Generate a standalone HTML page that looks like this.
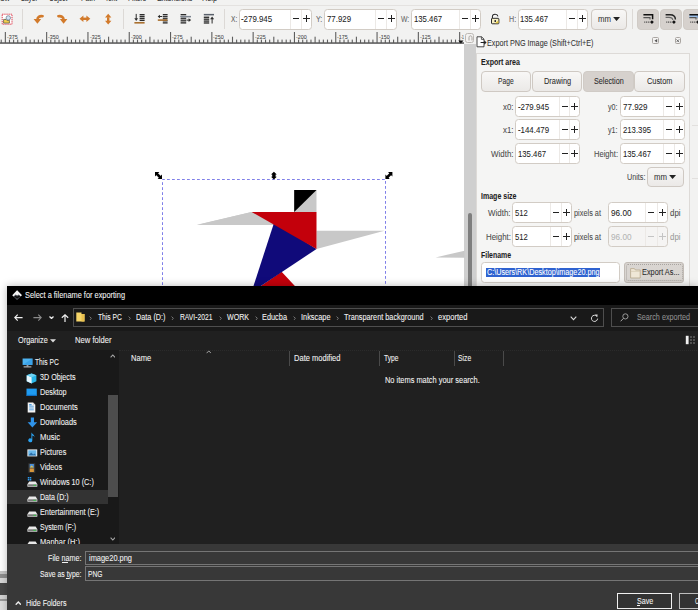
<!DOCTYPE html>
<html><head><meta charset="utf-8"><title>Export PNG Image</title>
<style>
html,body{margin:0;padding:0;}
body{width:698px;height:610px;overflow:hidden;background:#f2f2f1;font-family:"Liberation Sans",sans-serif;}
#root{position:relative;width:698px;height:610px;overflow:hidden;background:#f2f2f1;}
#root div,#root span.t,#root svg{position:absolute;box-sizing:border-box;}
span.t{white-space:pre;display:block;transform-origin:0 0;-webkit-text-stroke:0.06px currentColor;}
.inp{background:#fff;border:1px solid #d6d0ca;border-radius:3px;}
.btn{background:linear-gradient(#f8f7f6,#ebe9e7);border:1px solid #cfc9c3;border-radius:4px;}
.btnp{background:#d6d1cd;border:1px solid #d0cbc6;border-radius:4px;}

</style></head>
<body>
<div id="root">
<span class="t" style="left:-6.00px;top:-8px;font-size:8.5px;line-height:12px;transform:scaleX(0.8758);color:#333;">View</span>
<span class="t" style="left:21.30px;top:-8px;font-size:8.5px;line-height:12px;transform:scaleX(0.7854);color:#333;">Layer</span>
<span class="t" style="left:49.40px;top:-8px;font-size:8.5px;line-height:12px;transform:scaleX(0.7449);color:#333;">Object</span>
<span class="t" style="left:80.70px;top:-8px;font-size:8.5px;line-height:12px;transform:scaleX(0.8007);color:#333;">Path</span>
<span class="t" style="left:105.00px;top:-8px;font-size:8.5px;line-height:12px;transform:scaleX(0.7698);color:#333;">Text</span>
<span class="t" style="left:128.00px;top:-8px;font-size:8.5px;line-height:12px;transform:scaleX(0.7779);color:#333;">Filters</span>
<span class="t" style="left:156.60px;top:-8px;font-size:8.5px;line-height:12px;transform:scaleX(0.8514);color:#333;">Extensions</span>
<span class="t" style="left:202.00px;top:-8px;font-size:8.5px;line-height:12px;transform:scaleX(0.8581);color:#333;">Help</span>
<div style="left:0px;top:5px;width:698px;height:1px;background:#e4e2e0;"></div>
<div style="left:22px;top:8.5px;width:1px;height:20px;background:#dcd9d6;"></div>
<div style="left:123px;top:8.5px;width:1px;height:20px;background:#dcd9d6;"></div>
<div style="left:224px;top:8.5px;width:1px;height:20px;background:#dcd9d6;"></div>
<div style="left:632px;top:8.5px;width:1px;height:20px;background:#dcd9d6;"></div>
<span class="t" style="left:231.00px;top:13px;font-size:8.5px;line-height:12px;transform:scaleX(0.7720);color:#666;">X:</span>
<div style="left:239px;top:8.6px;width:72.5px;height:21px;background:#fff;border:1px solid #d2ccc5;border-radius:3.5px;"></div>
<div style="left:290px;top:9.6px;width:1px;height:19px;background:#ece9e6;"></div>
<div style="left:300.5px;top:9.6px;width:1px;height:19px;background:#ece9e6;"></div>
<span class="t" style="left:241.30px;top:13px;font-size:8.5px;line-height:12px;transform:scaleX(0.9268);color:#1c1c1c;">-279.945</span>
<div style="left:293px;top:18px;width:6px;height:1.3px;background:#222;"></div>
<div style="left:303.4px;top:18px;width:6.5px;height:1.3px;background:#222;"></div>
<div style="left:306px;top:15.4px;width:1.3px;height:6.5px;background:#222;"></div>
<span class="t" style="left:316.00px;top:13px;font-size:8.5px;line-height:12px;transform:scaleX(0.8331);color:#666;">Y:</span>
<div style="left:324px;top:8.6px;width:72.5px;height:21px;background:#fff;border:1px solid #d2ccc5;border-radius:3.5px;"></div>
<div style="left:375px;top:9.6px;width:1px;height:19px;background:#ece9e6;"></div>
<div style="left:385.5px;top:9.6px;width:1px;height:19px;background:#ece9e6;"></div>
<span class="t" style="left:326.50px;top:13px;font-size:8.5px;line-height:12px;transform:scaleX(0.9231);color:#1c1c1c;">77.929</span>
<div style="left:378px;top:18px;width:6px;height:1.3px;background:#222;"></div>
<div style="left:388.4px;top:18px;width:6.5px;height:1.3px;background:#222;"></div>
<div style="left:391px;top:15.4px;width:1.3px;height:6.5px;background:#222;"></div>
<span class="t" style="left:401.00px;top:13px;font-size:8.5px;line-height:12px;transform:scaleX(0.8015);color:#666;">W:</span>
<div style="left:411px;top:8.6px;width:70px;height:21px;background:#fff;border:1px solid #d2ccc5;border-radius:3.5px;"></div>
<div style="left:459px;top:9.6px;width:1px;height:19px;background:#ece9e6;"></div>
<div style="left:470px;top:9.6px;width:1px;height:19px;background:#ece9e6;"></div>
<span class="t" style="left:413.50px;top:13px;font-size:8.5px;line-height:12px;transform:scaleX(0.9113);color:#1c1c1c;">135.467</span>
<div style="left:462px;top:18px;width:6px;height:1.3px;background:#222;"></div>
<div style="left:472.4px;top:18px;width:6.5px;height:1.3px;background:#222;"></div>
<div style="left:475px;top:15.4px;width:1.3px;height:6.5px;background:#222;"></div>
<span class="t" style="left:508.70px;top:13px;font-size:8.5px;line-height:12px;transform:scaleX(0.8353);color:#666;">H:</span>
<div style="left:518px;top:8.6px;width:69.5px;height:21px;background:#fff;border:1px solid #d2ccc5;border-radius:3.5px;"></div>
<div style="left:566px;top:9.6px;width:1px;height:19px;background:#ece9e6;"></div>
<div style="left:576.5px;top:9.6px;width:1px;height:19px;background:#ece9e6;"></div>
<span class="t" style="left:520.00px;top:13px;font-size:8.5px;line-height:12px;transform:scaleX(0.9113);color:#1c1c1c;">135.467</span>
<div style="left:569px;top:18px;width:6px;height:1.3px;background:#222;"></div>
<div style="left:579.4px;top:18px;width:6.5px;height:1.3px;background:#222;"></div>
<div style="left:582px;top:15.4px;width:1.3px;height:6.5px;background:#222;"></div>
<div class="btn" style="left:590.6px;top:8.6px;width:36.8px;height:21px;background:;"></div>
<span class="t" style="left:597.80px;top:13px;font-size:8.5px;line-height:12px;transform:scaleX(0.9180);color:#333;">mm</span>
<svg style="left:612.8px;top:17.2px" width="7.2" height="4" viewBox="0 0 8 4.6"><path d="M0 0H8L4 4.6Z" fill="#222"/></svg>
<div class="btnp" style="left:637px;top:8.7px;width:22.2px;height:21px;background:;"></div>
<div class="btnp" style="left:660px;top:8.7px;width:22.3px;height:21px;background:;"></div>
<div class="btnp" style="left:683.2px;top:8.7px;width:22.4px;height:21px;background:;"></div>
<svg style="left:1px;top:13px" width="12" height="12" viewBox="0 0 12 12"><rect x="1.2" y="1.2" width="9.8" height="10" fill="#fff" stroke="#dc3a4c" stroke-width="1" stroke-dasharray="1.3 0.8"/><path d="M2.6 6.4H5L5.8 7.3H8.4V10.1H2.6Z" fill="#f2cf4d" stroke="#4a4a3a" stroke-width="0.7"/><circle cx="7.3" cy="4.9" r="2.2" fill="#cfe4f5" stroke="#6f7f8e" stroke-width="0.8"/></svg>
<svg style="left:33px;top:14px" width="11" height="11" viewBox="0 0 11 11"><path d="M9.6 2.2C6.4 1.8 4.4 3.2 4.4 6" fill="none" stroke="#d27a2b" stroke-width="2.6" stroke-linecap="round"/><path d="M0.6 5H8.2L4.4 9.8Z" fill="#d27a2b"/></svg>
<svg style="left:57px;top:14px" width="11" height="11" viewBox="0 0 11 11"><path d="M1.4 2.2C4.6 1.8 6.6 3.2 6.6 6" fill="none" stroke="#d27a2b" stroke-width="2.6" stroke-linecap="round"/><path d="M2.8 5H10.4L6.6 9.8Z" fill="#d27a2b"/></svg>
<svg style="left:79px;top:15px" width="12" height="8" viewBox="0 0 12 8"><path d="M0.5 3.8L4.4 0.5V7.1Z M11.3 3.8L7.4 0.5V7.1Z" fill="#d27a2b"/><rect x="4" y="2.6" width="4" height="2.4" fill="#d27a2b"/></svg>
<svg style="left:104px;top:13px" width="8" height="12" viewBox="0 0 8 12"><path d="M4.2 0.7L7.4 4.5H1Z M4.2 11.5L7.4 7.7H1Z" fill="#d27a2b"/><rect x="3" y="4.2" width="2.4" height="3.8" fill="#d27a2b"/></svg>
<svg style="left:134px;top:13px" width="12" height="12" viewBox="0 0 12 12"><rect x="5.6" y="1.00" width="5" height="1.35" fill="#2c2c2c"/><rect x="5.6" y="2.90" width="5" height="1.35" fill="#2c2c2c"/><rect x="5.6" y="4.80" width="5" height="1.35" fill="#2c2c2c"/><rect x="5.6" y="6.70" width="5" height="1.35" fill="#2c2c2c"/><rect x="1.7" y="0.9" width="1" height="5" fill="#2c2c2c"/><path d="M0.3 5.2H4.1L2.2 8Z" fill="#2c2c2c"/><rect x="0.4" y="9" width="10.2" height="1.6" fill="#a9702f"/></svg>
<svg style="left:157px;top:13px" width="12" height="12" viewBox="0 0 12 12"><rect x="5.8" y="1.00" width="4.8" height="1.35" fill="#2c2c2c"/><rect x="5.8" y="3.05" width="4.8" height="1.35" fill="#2c2c2c"/><rect x="5.8" y="5.10" width="4.8" height="1.35" fill="#2c2c2c"/><rect x="5.8" y="7.15" width="4.8" height="1.35" fill="#2c2c2c"/><rect x="5.8" y="9.20" width="4.8" height="1.35" fill="#2c2c2c"/><rect x="2" y="3" width="3.2" height="1" fill="#2c2c2c"/><path d="M0.6 3.5L3 1.7V5.3Z" fill="#2c2c2c"/><rect x="0.8" y="6.3" width="9.5" height="1.6" fill="#a9702f"/></svg>
<svg style="left:180px;top:13px" width="12" height="12" viewBox="0 0 12 12"><rect x="0.6" y="1.00" width="5.6" height="1.35" fill="#2c2c2c"/><rect x="0.6" y="3.05" width="5.6" height="1.35" fill="#2c2c2c"/><rect x="0.6" y="5.10" width="5.6" height="1.35" fill="#2c2c2c"/><rect x="0.6" y="7.15" width="5.6" height="1.35" fill="#2c2c2c"/><rect x="0.6" y="9.20" width="5.6" height="1.35" fill="#2c2c2c"/><rect x="0.8" y="2.9" width="10.2" height="1.5" fill="#7d8590"/><rect x="6.6" y="6.6" width="3" height="1" fill="#2c2c2c"/><path d="M11.2 7.1L8.6 5.2V9Z" fill="#2c2c2c"/></svg>
<svg style="left:203px;top:13px" width="12" height="12" viewBox="0 0 12 12"><rect x="0.8" y="0.9" width="10.2" height="1.5" fill="#59606b"/><rect x="0.8" y="3.60" width="5.4" height="1.35" fill="#2c2c2c"/><rect x="0.8" y="5.50" width="5.4" height="1.35" fill="#2c2c2c"/><rect x="0.8" y="7.40" width="5.4" height="1.35" fill="#2c2c2c"/><rect x="0.8" y="9.30" width="5.4" height="1.35" fill="#2c2c2c"/><rect x="8.6" y="5.5" width="1" height="5" fill="#2c2c2c"/><path d="M9.1 3.4L11.1 6.3H7.1Z" fill="#2c2c2c"/></svg>
<svg style="left:490px;top:13px" width="11" height="12" viewBox="0 0 11 12"><path d="M2.4 5.4V3.6C2.4 0.8 7.4 0.4 8 3.4" fill="none" stroke="#fff" stroke-width="2.4"/><rect x="0.6" y="4.6" width="9.2" height="7" rx="1" fill="#fff"/><path d="M2.4 5.4V3.6C2.4 0.8 7.4 0.4 8 3.4" fill="none" stroke="#2a2a2a" stroke-width="1.1"/><rect x="1.5" y="5.3" width="7.4" height="5.5" rx="0.7" fill="#f6efc4" stroke="#2a2a2a" stroke-width="1"/><path d="M5 10.3H8.4V7.4Z" fill="#e9c93c"/><rect x="4.5" y="7.1" width="1.5" height="1.9" fill="#2a2a2a"/></svg>
<svg style="left:642.6px;top:13px" width="12" height="12" viewBox="0 0 12 12"><path d="M0.4 1.8H9.6V6.2" fill="none" stroke="#111" stroke-width="1.5"/><path d="M0.4 4.6H7V6.4" fill="none" stroke="#555" stroke-width="1.1"/><path d="M1.2 9.1H7.4" fill="none" stroke="#333" stroke-width="1" stroke-dasharray="1.1 0.7"/><path d="M7.2 9.1L8.9 7.3L10.8 9.1L8.9 10.9Z" fill="#111"/></svg>
<svg style="left:688.7px;top:13px" width="12" height="12" viewBox="0 0 12 12"><rect x="0.4" y="1.6" width="10" height="3.4" fill="#9dc0ea"/><path d="M0.4 1.8H9.6V6.2" fill="none" stroke="#111" stroke-width="1.5"/><path d="M0.4 4.6H7V6.4" fill="none" stroke="#555" stroke-width="1.1"/><path d="M1.2 9.1H7.4" fill="none" stroke="#333" stroke-width="1" stroke-dasharray="1.1 0.7"/><path d="M7.2 9.1L8.9 7.3L10.8 9.1L8.9 10.9Z" fill="#111"/></svg>
<svg style="left:665.4px;top:13px" width="12" height="12" viewBox="0 0 12 12"><path d="M0.6 1.8H5C8.6 1.8 10.4 3.6 10.4 6.6" fill="none" stroke="#222" stroke-width="1.4"/><path d="M0.6 4.4H4C6.4 4.4 7.6 5.4 7.8 7" fill="none" stroke="#666" stroke-width="1.1"/><path d="M1.2 9.1H7.4" fill="none" stroke="#333" stroke-width="1" stroke-dasharray="1.1 0.7"/><path d="M7.2 9.1L8.9 7.3L10.8 9.1L8.9 10.9Z" fill="#111"/></svg>
<svg style="left:0;top:31px" width="464" height="13" viewBox="0 0 464 13"><rect x="0.67" y="8.600000000000001" width="1.1" height="3.4" fill="#5e5e5e"/><rect x="4.80" y="1" width="1.1" height="11.0" fill="#5e5e5e"/><rect x="8.93" y="8.600000000000001" width="1.1" height="3.4" fill="#5e5e5e"/><rect x="13.06" y="8.600000000000001" width="1.1" height="3.4" fill="#5e5e5e"/><rect x="17.19" y="8.600000000000001" width="1.1" height="3.4" fill="#5e5e5e"/><rect x="21.32" y="8.600000000000001" width="1.1" height="3.4" fill="#5e5e5e"/><rect x="25.45" y="5.700000000000003" width="1.1" height="6.3" fill="#5e5e5e"/><rect x="29.58" y="8.600000000000001" width="1.1" height="3.4" fill="#5e5e5e"/><rect x="33.71" y="8.600000000000001" width="1.1" height="3.4" fill="#5e5e5e"/><rect x="37.84" y="8.600000000000001" width="1.1" height="3.4" fill="#5e5e5e"/><rect x="41.97" y="8.600000000000001" width="1.1" height="3.4" fill="#5e5e5e"/><rect x="46.10" y="1" width="1.1" height="11.0" fill="#5e5e5e"/><rect x="50.23" y="8.600000000000001" width="1.1" height="3.4" fill="#5e5e5e"/><rect x="54.36" y="8.600000000000001" width="1.1" height="3.4" fill="#5e5e5e"/><rect x="58.49" y="8.600000000000001" width="1.1" height="3.4" fill="#5e5e5e"/><rect x="62.62" y="8.600000000000001" width="1.1" height="3.4" fill="#5e5e5e"/><rect x="66.75" y="5.700000000000003" width="1.1" height="6.3" fill="#5e5e5e"/><rect x="70.88" y="8.600000000000001" width="1.1" height="3.4" fill="#5e5e5e"/><rect x="75.01" y="8.600000000000001" width="1.1" height="3.4" fill="#5e5e5e"/><rect x="79.14" y="8.600000000000001" width="1.1" height="3.4" fill="#5e5e5e"/><rect x="83.27" y="8.600000000000001" width="1.1" height="3.4" fill="#5e5e5e"/><rect x="87.40" y="1" width="1.1" height="11.0" fill="#5e5e5e"/><rect x="91.53" y="8.600000000000001" width="1.1" height="3.4" fill="#5e5e5e"/><rect x="95.66" y="8.600000000000001" width="1.1" height="3.4" fill="#5e5e5e"/><rect x="99.79" y="8.600000000000001" width="1.1" height="3.4" fill="#5e5e5e"/><rect x="103.92" y="8.600000000000001" width="1.1" height="3.4" fill="#5e5e5e"/><rect x="108.05" y="5.700000000000003" width="1.1" height="6.3" fill="#5e5e5e"/><rect x="112.18" y="8.600000000000001" width="1.1" height="3.4" fill="#5e5e5e"/><rect x="116.31" y="8.600000000000001" width="1.1" height="3.4" fill="#5e5e5e"/><rect x="120.44" y="8.600000000000001" width="1.1" height="3.4" fill="#5e5e5e"/><rect x="124.57" y="8.600000000000001" width="1.1" height="3.4" fill="#5e5e5e"/><rect x="128.70" y="1" width="1.1" height="11.0" fill="#5e5e5e"/><rect x="132.83" y="8.600000000000001" width="1.1" height="3.4" fill="#5e5e5e"/><rect x="136.96" y="8.600000000000001" width="1.1" height="3.4" fill="#5e5e5e"/><rect x="141.09" y="8.600000000000001" width="1.1" height="3.4" fill="#5e5e5e"/><rect x="145.22" y="8.600000000000001" width="1.1" height="3.4" fill="#5e5e5e"/><rect x="149.35" y="5.700000000000003" width="1.1" height="6.3" fill="#5e5e5e"/><rect x="153.48" y="8.600000000000001" width="1.1" height="3.4" fill="#5e5e5e"/><rect x="157.61" y="8.600000000000001" width="1.1" height="3.4" fill="#5e5e5e"/><rect x="161.74" y="8.600000000000001" width="1.1" height="3.4" fill="#5e5e5e"/><rect x="165.87" y="8.600000000000001" width="1.1" height="3.4" fill="#5e5e5e"/><rect x="170.00" y="1" width="1.1" height="11.0" fill="#5e5e5e"/><rect x="174.13" y="8.600000000000001" width="1.1" height="3.4" fill="#5e5e5e"/><rect x="178.26" y="8.600000000000001" width="1.1" height="3.4" fill="#5e5e5e"/><rect x="182.39" y="8.600000000000001" width="1.1" height="3.4" fill="#5e5e5e"/><rect x="186.52" y="8.600000000000001" width="1.1" height="3.4" fill="#5e5e5e"/><rect x="190.65" y="5.700000000000003" width="1.1" height="6.3" fill="#5e5e5e"/><rect x="194.78" y="8.600000000000001" width="1.1" height="3.4" fill="#5e5e5e"/><rect x="198.91" y="8.600000000000001" width="1.1" height="3.4" fill="#5e5e5e"/><rect x="203.04" y="8.600000000000001" width="1.1" height="3.4" fill="#5e5e5e"/><rect x="207.17" y="8.600000000000001" width="1.1" height="3.4" fill="#5e5e5e"/><rect x="211.30" y="1" width="1.1" height="11.0" fill="#5e5e5e"/><rect x="215.43" y="8.600000000000001" width="1.1" height="3.4" fill="#5e5e5e"/><rect x="219.56" y="8.600000000000001" width="1.1" height="3.4" fill="#5e5e5e"/><rect x="223.69" y="8.600000000000001" width="1.1" height="3.4" fill="#5e5e5e"/><rect x="227.82" y="8.600000000000001" width="1.1" height="3.4" fill="#5e5e5e"/><rect x="231.95" y="5.700000000000003" width="1.1" height="6.3" fill="#5e5e5e"/><rect x="236.08" y="8.600000000000001" width="1.1" height="3.4" fill="#5e5e5e"/><rect x="240.21" y="8.600000000000001" width="1.1" height="3.4" fill="#5e5e5e"/><rect x="244.34" y="8.600000000000001" width="1.1" height="3.4" fill="#5e5e5e"/><rect x="248.47" y="8.600000000000001" width="1.1" height="3.4" fill="#5e5e5e"/><rect x="252.60" y="1" width="1.1" height="11.0" fill="#5e5e5e"/><rect x="256.73" y="8.600000000000001" width="1.1" height="3.4" fill="#5e5e5e"/><rect x="260.86" y="8.600000000000001" width="1.1" height="3.4" fill="#5e5e5e"/><rect x="264.99" y="8.600000000000001" width="1.1" height="3.4" fill="#5e5e5e"/><rect x="269.12" y="8.600000000000001" width="1.1" height="3.4" fill="#5e5e5e"/><rect x="273.25" y="5.700000000000003" width="1.1" height="6.3" fill="#5e5e5e"/><rect x="277.38" y="8.600000000000001" width="1.1" height="3.4" fill="#5e5e5e"/><rect x="281.51" y="8.600000000000001" width="1.1" height="3.4" fill="#5e5e5e"/><rect x="285.64" y="8.600000000000001" width="1.1" height="3.4" fill="#5e5e5e"/><rect x="289.77" y="8.600000000000001" width="1.1" height="3.4" fill="#5e5e5e"/><rect x="293.90" y="1" width="1.1" height="11.0" fill="#5e5e5e"/><rect x="298.03" y="8.600000000000001" width="1.1" height="3.4" fill="#5e5e5e"/><rect x="302.16" y="8.600000000000001" width="1.1" height="3.4" fill="#5e5e5e"/><rect x="306.29" y="8.600000000000001" width="1.1" height="3.4" fill="#5e5e5e"/><rect x="310.42" y="8.600000000000001" width="1.1" height="3.4" fill="#5e5e5e"/><rect x="314.55" y="5.700000000000003" width="1.1" height="6.3" fill="#5e5e5e"/><rect x="318.68" y="8.600000000000001" width="1.1" height="3.4" fill="#5e5e5e"/><rect x="322.81" y="8.600000000000001" width="1.1" height="3.4" fill="#5e5e5e"/><rect x="326.94" y="8.600000000000001" width="1.1" height="3.4" fill="#5e5e5e"/><rect x="331.07" y="8.600000000000001" width="1.1" height="3.4" fill="#5e5e5e"/><rect x="335.20" y="1" width="1.1" height="11.0" fill="#5e5e5e"/><rect x="339.33" y="8.600000000000001" width="1.1" height="3.4" fill="#5e5e5e"/><rect x="343.46" y="8.600000000000001" width="1.1" height="3.4" fill="#5e5e5e"/><rect x="347.59" y="8.600000000000001" width="1.1" height="3.4" fill="#5e5e5e"/><rect x="351.72" y="8.600000000000001" width="1.1" height="3.4" fill="#5e5e5e"/><rect x="355.85" y="5.700000000000003" width="1.1" height="6.3" fill="#5e5e5e"/><rect x="359.98" y="8.600000000000001" width="1.1" height="3.4" fill="#5e5e5e"/><rect x="364.11" y="8.600000000000001" width="1.1" height="3.4" fill="#5e5e5e"/><rect x="368.24" y="8.600000000000001" width="1.1" height="3.4" fill="#5e5e5e"/><rect x="372.37" y="8.600000000000001" width="1.1" height="3.4" fill="#5e5e5e"/><rect x="376.50" y="1" width="1.1" height="11.0" fill="#5e5e5e"/><rect x="380.63" y="8.600000000000001" width="1.1" height="3.4" fill="#5e5e5e"/><rect x="384.76" y="8.600000000000001" width="1.1" height="3.4" fill="#5e5e5e"/><rect x="388.89" y="8.600000000000001" width="1.1" height="3.4" fill="#5e5e5e"/><rect x="393.02" y="8.600000000000001" width="1.1" height="3.4" fill="#5e5e5e"/><rect x="397.15" y="5.700000000000003" width="1.1" height="6.3" fill="#5e5e5e"/><rect x="401.28" y="8.600000000000001" width="1.1" height="3.4" fill="#5e5e5e"/><rect x="405.41" y="8.600000000000001" width="1.1" height="3.4" fill="#5e5e5e"/><rect x="409.54" y="8.600000000000001" width="1.1" height="3.4" fill="#5e5e5e"/><rect x="413.67" y="8.600000000000001" width="1.1" height="3.4" fill="#5e5e5e"/><rect x="417.80" y="1" width="1.1" height="11.0" fill="#5e5e5e"/><rect x="421.93" y="8.600000000000001" width="1.1" height="3.4" fill="#5e5e5e"/><rect x="426.06" y="8.600000000000001" width="1.1" height="3.4" fill="#5e5e5e"/><rect x="430.19" y="8.600000000000001" width="1.1" height="3.4" fill="#5e5e5e"/><rect x="434.32" y="8.600000000000001" width="1.1" height="3.4" fill="#5e5e5e"/><rect x="438.45" y="5.700000000000003" width="1.1" height="6.3" fill="#5e5e5e"/><rect x="442.58" y="8.600000000000001" width="1.1" height="3.4" fill="#5e5e5e"/><rect x="446.71" y="8.600000000000001" width="1.1" height="3.4" fill="#5e5e5e"/><rect x="450.84" y="8.600000000000001" width="1.1" height="3.4" fill="#5e5e5e"/><rect x="454.97" y="8.600000000000001" width="1.1" height="3.4" fill="#5e5e5e"/><rect x="459.10" y="1" width="1.1" height="11.0" fill="#5e5e5e"/><rect x="0" y="11.3" width="464" height="1.5" fill="#585858"/></svg>
<span class="t" style="left:6.90px;top:32px;font-size:6px;line-height:10px;transform:scaleX(0.8910);color:#444;">-375</span>
<span class="t" style="left:48.20px;top:32px;font-size:6px;line-height:10px;transform:scaleX(0.8910);color:#444;">-350</span>
<span class="t" style="left:89.50px;top:32px;font-size:6px;line-height:10px;transform:scaleX(0.8910);color:#444;">-325</span>
<span class="t" style="left:130.80px;top:32px;font-size:6px;line-height:10px;transform:scaleX(0.8910);color:#444;">-300</span>
<span class="t" style="left:172.10px;top:32px;font-size:6px;line-height:10px;transform:scaleX(0.8910);color:#444;">-275</span>
<span class="t" style="left:213.40px;top:32px;font-size:6px;line-height:10px;transform:scaleX(0.8910);color:#444;">-250</span>
<span class="t" style="left:254.70px;top:32px;font-size:6px;line-height:10px;transform:scaleX(0.8910);color:#444;">-225</span>
<span class="t" style="left:296.00px;top:32px;font-size:6px;line-height:10px;transform:scaleX(0.8910);color:#444;">-200</span>
<span class="t" style="left:337.30px;top:32px;font-size:6px;line-height:10px;transform:scaleX(0.8910);color:#444;">-175</span>
<span class="t" style="left:378.60px;top:32px;font-size:6px;line-height:10px;transform:scaleX(0.8910);color:#444;">-150</span>
<span class="t" style="left:419.90px;top:32px;font-size:6px;line-height:10px;transform:scaleX(0.8910);color:#444;">-125</span>
<span class="t" style="left:461.20px;top:32px;font-size:6px;line-height:10px;transform:scaleX(0.5436);color:#444;">-1</span>
<div style="left:0px;top:44px;width:464px;height:527px;background:#fff;"></div>
<svg style="left:458px;top:40px" width="6" height="4" viewBox="0 0 6 4"><path d="M0.3 0.6H5.5L2.9 3.6Z" fill="#111"/></svg>
<div style="left:464.8px;top:32.5px;width:9.6px;height:10.5px;background:#f3f2f1;border:1px solid #bcb8b4;border-radius:2.5px;"></div>
<svg style="left:467.5px;top:34.5px" width="5" height="6" viewBox="0 0 5 6"><path d="M1 5.5V2.5C1 0.3 4 0.3 4 2.5V5.5" fill="none" stroke="#a6a39f" stroke-width="1"/></svg>
<div style="left:464px;top:44px;width:11.6px;height:245px;background:#cfcfcf;"></div>
<div style="left:467.9px;top:213px;width:3.8px;height:80px;background:#7e7e7e;border-radius:2px;"></div>
<svg style="left:150px;top:160px" width="320" height="130" viewBox="150 160 320 130"><path d="M197 224.7L251.5 212V224.7Z" fill="#c8c8c8"/><path d="M251.5 212L275 212L275 224.9L197 224.9Z" fill="#c8c8c8"/><path d="M294.2 190H316.5V212H294.2Z" fill="#c8c8c8"/><path d="M294.2 190H316.5L294.2 212Z" fill="#000"/><path d="M316.5 230.8H384.5L316.5 249Z" fill="#c8c8c8"/><path d="M281.6 271.7L255 290H298.6Z" fill="#c3000b"/><path d="M274.3 222L316.5 249L254.8 290H252.2Z" fill="#100a7a"/><path d="M251.6 212H316.5V249Z" fill="#c3000b"/><path d="M435.5 257.4L464.5 250.7V257.7Z" fill="#c8c8c8"/><path d="M162.5 290V179.5H385.5V290" fill="none" stroke="#7070e6" stroke-width="0.9" stroke-dasharray="2.8 2.2"/><g fill="#000"><path d="M155 172.1H159.4L155 176.5Z M162 179H157.6L162 174.6Z"/><path d="M156.6 173.7L160.4 177.5" stroke="#000" stroke-width="2.6"/><path d="M392.4 172.1H388L392.4 176.5Z M385.4 179H389.8L385.4 174.6Z"/><path d="M390.8 173.7L387 177.5" stroke="#000" stroke-width="2.6"/><path d="M273.9 171.8L276.8 174.6H275.6V176.8H276.8L273.9 179.6L271 176.8H272.2V174.6H271Z"/></g></svg>
<svg style="left:476px;top:36px" width="11" height="12" viewBox="0 0 11 12"><path d="M1 0.8H5.6L8 3.2V10.8H1Z" fill="#fff" stroke="#333" stroke-width="0.9"/><path d="M5.4 0.8V3.4H8" fill="none" stroke="#333" stroke-width="0.8"/><path d="M4.6 5.9H8.2V4.3L10.6 6.5L8.2 8.7V7.1H4.6Z" fill="#222"/></svg>
<span class="t" style="left:487.00px;top:37px;font-size:8.5px;line-height:12px;transform:scaleX(0.8508);color:#333;">Export PNG Image (Shift+Ctrl+E)</span>
<div style="left:652px;top:37px;width:6.5px;height:6.5px;background:#f4f3f2;border:1px solid #aaa6a2;border-radius:1.5px;"></div>
<div style="left:674.5px;top:37px;width:6.5px;height:6.5px;background:#f4f3f2;border:1px solid #aaa6a2;border-radius:1.5px;"></div>
<svg style="left:653.5px;top:38.7px" width="4" height="4" viewBox="0 0 4 4"><path d="M0.4 1.7L3.2 0V3.4Z" fill="#555"/></svg>
<svg style="left:676px;top:38.5px" width="4" height="4" viewBox="0 0 4 4"><path d="M0.4 0.4L3.2 3.2M3.2 0.4L0.4 3.2" stroke="#555" stroke-width="0.8"/></svg>
<div style="left:476px;top:52.6px;width:213.6px;height:236px;background:#f5f5f4;border:1px solid #dddad7;"></div>
<span class="t" style="left:480.90px;top:56px;font-size:8.5px;line-height:12px;transform:scaleX(0.8317);color:#1e1e1e;font-weight:bold;">Export area</span>
<div class="btn" style="left:480.7px;top:71px;width:50.5px;height:20.7px;background:;"></div>
<span class="t" style="left:498.00px;top:75px;font-size:8.5px;line-height:12px;transform:scaleX(0.7858);color:#2a2a2a;">Page</span>
<div class="btn" style="left:531.7px;top:71px;width:50.5px;height:20.7px;background:;"></div>
<span class="t" style="left:543.60px;top:75px;font-size:8.5px;line-height:12px;transform:scaleX(0.8724);color:#2a2a2a;">Drawing</span>
<div class="btnp" style="left:582.6px;top:71px;width:51px;height:20.7px;background:;"></div>
<span class="t" style="left:593.50px;top:75px;font-size:8.5px;line-height:12px;transform:scaleX(0.8494);color:#2a2a2a;">Selection</span>
<div class="btn" style="left:634.4px;top:71px;width:50.3px;height:20.7px;background:;"></div>
<span class="t" style="left:647.00px;top:75px;font-size:8.5px;line-height:12px;transform:scaleX(0.8673);color:#2a2a2a;">Custom</span>
<span class="t" style="left:503.00px;top:101px;font-size:8.5px;line-height:12px;transform:scaleX(0.9260);color:#4a4a4a;">x0:</span>
<div style="left:515px;top:96px;width:65px;height:21px;background:#fff;border:1px solid #d2ccc5;border-radius:3.5px;"></div>
<div style="left:558.9px;top:97px;width:1px;height:19px;background:#ece9e6;"></div>
<div style="left:569.4px;top:97px;width:1px;height:19px;background:#ece9e6;"></div>
<span class="t" style="left:517.50px;top:101px;font-size:8.5px;line-height:12px;transform:scaleX(0.9238);color:#1c1c1c;">-279.945</span>
<div style="left:562px;top:106px;width:6px;height:1.3px;background:#222;"></div>
<div style="left:571.4px;top:106px;width:6.5px;height:1.3px;background:#222;"></div>
<div style="left:574px;top:103.4px;width:1.3px;height:6.5px;background:#222;"></div>
<span class="t" style="left:608.00px;top:101px;font-size:8.5px;line-height:12px;transform:scaleX(0.8378);color:#4a4a4a;">y0:</span>
<div style="left:620px;top:96px;width:65px;height:21px;background:#fff;border:1px solid #d2ccc5;border-radius:3.5px;"></div>
<div style="left:663.4px;top:97px;width:1px;height:19px;background:#ece9e6;"></div>
<div style="left:674.3px;top:97px;width:1px;height:19px;background:#ece9e6;"></div>
<span class="t" style="left:622.50px;top:101px;font-size:8.5px;line-height:12px;transform:scaleX(0.9424);color:#1c1c1c;">77.929</span>
<div style="left:666px;top:106px;width:6px;height:1.3px;background:#222;"></div>
<div style="left:676.4px;top:106px;width:6.5px;height:1.3px;background:#222;"></div>
<div style="left:679px;top:103.4px;width:1.3px;height:6.5px;background:#222;"></div>
<span class="t" style="left:503.00px;top:124px;font-size:8.5px;line-height:12px;transform:scaleX(0.9260);color:#4a4a4a;">x1:</span>
<div style="left:515px;top:119px;width:65px;height:21px;background:#fff;border:1px solid #d2ccc5;border-radius:3.5px;"></div>
<div style="left:558.9px;top:120px;width:1px;height:19px;background:#ece9e6;"></div>
<div style="left:569.4px;top:120px;width:1px;height:19px;background:#ece9e6;"></div>
<span class="t" style="left:517.50px;top:124px;font-size:8.5px;line-height:12px;transform:scaleX(0.9238);color:#1c1c1c;">-144.479</span>
<div style="left:562px;top:129px;width:6px;height:1.3px;background:#222;"></div>
<div style="left:571.4px;top:129px;width:6.5px;height:1.3px;background:#222;"></div>
<div style="left:574px;top:126.4px;width:1.3px;height:6.5px;background:#222;"></div>
<span class="t" style="left:608.00px;top:124px;font-size:8.5px;line-height:12px;transform:scaleX(0.8378);color:#4a4a4a;">y1:</span>
<div style="left:620px;top:119px;width:65px;height:21px;background:#fff;border:1px solid #d2ccc5;border-radius:3.5px;"></div>
<div style="left:663.4px;top:120px;width:1px;height:19px;background:#ece9e6;"></div>
<div style="left:674.3px;top:120px;width:1px;height:19px;background:#ece9e6;"></div>
<span class="t" style="left:622.50px;top:124px;font-size:8.5px;line-height:12px;transform:scaleX(0.9113);color:#1c1c1c;">213.395</span>
<div style="left:666px;top:129px;width:6px;height:1.3px;background:#222;"></div>
<div style="left:676.4px;top:129px;width:6.5px;height:1.3px;background:#222;"></div>
<div style="left:679px;top:126.4px;width:1.3px;height:6.5px;background:#222;"></div>
<span class="t" style="left:491.00px;top:148px;font-size:8.5px;line-height:12px;transform:scaleX(0.9340);color:#4a4a4a;">Width:</span>
<div style="left:515px;top:143px;width:65px;height:21px;background:#fff;border:1px solid #d2ccc5;border-radius:3.5px;"></div>
<div style="left:558.9px;top:144px;width:1px;height:19px;background:#ece9e6;"></div>
<div style="left:569.4px;top:144px;width:1px;height:19px;background:#ece9e6;"></div>
<span class="t" style="left:517.50px;top:148px;font-size:8.5px;line-height:12px;transform:scaleX(0.9113);color:#1c1c1c;">135.467</span>
<div style="left:562px;top:153px;width:6px;height:1.3px;background:#222;"></div>
<div style="left:571.4px;top:153px;width:6.5px;height:1.3px;background:#222;"></div>
<div style="left:574px;top:150.4px;width:1.3px;height:6.5px;background:#222;"></div>
<span class="t" style="left:593.50px;top:148px;font-size:8.5px;line-height:12px;transform:scaleX(0.8911);color:#4a4a4a;">Height:</span>
<div style="left:620px;top:143px;width:65px;height:21px;background:#fff;border:1px solid #d2ccc5;border-radius:3.5px;"></div>
<div style="left:663.4px;top:144px;width:1px;height:19px;background:#ece9e6;"></div>
<div style="left:674.3px;top:144px;width:1px;height:19px;background:#ece9e6;"></div>
<span class="t" style="left:622.50px;top:148px;font-size:8.5px;line-height:12px;transform:scaleX(0.9113);color:#1c1c1c;">135.467</span>
<div style="left:666px;top:153px;width:6px;height:1.3px;background:#222;"></div>
<div style="left:676.4px;top:153px;width:6.5px;height:1.3px;background:#222;"></div>
<div style="left:679px;top:150.4px;width:1.3px;height:6.5px;background:#222;"></div>
<span class="t" style="left:627.00px;top:171px;font-size:8.5px;line-height:12px;transform:scaleX(0.8515);color:#4a4a4a;">Units:</span>
<div class="btn" style="left:647.3px;top:166.6px;width:37px;height:20.7px;background:;"></div>
<span class="t" style="left:654.30px;top:171px;font-size:8.5px;line-height:12px;transform:scaleX(0.9180);color:#333;">mm</span>
<svg style="left:669.4px;top:175.2px" width="7.2" height="4" viewBox="0 0 8 4.6"><path d="M0 0H8L4 4.6Z" fill="#222"/></svg>
<span class="t" style="left:481.00px;top:190px;font-size:8.5px;line-height:12px;transform:scaleX(0.8257);color:#1e1e1e;font-weight:bold;">Image size</span>
<span class="t" style="left:488.00px;top:207px;font-size:8.5px;line-height:12px;transform:scaleX(0.9340);color:#4a4a4a;">Width:</span>
<div style="left:512px;top:202px;width:60px;height:21px;background:#fff;border:1px solid #d2ccc5;border-radius:3.5px;"></div>
<div style="left:549.6px;top:203px;width:1px;height:19px;background:#ece9e6;"></div>
<div style="left:560.6px;top:203px;width:1px;height:19px;background:#ece9e6;"></div>
<span class="t" style="left:514.50px;top:207px;font-size:8.5px;line-height:12px;transform:scaleX(0.9026);color:#1c1c1c;">512</span>
<div style="left:553px;top:212px;width:6px;height:1.3px;background:#222;"></div>
<div style="left:563.4px;top:212px;width:6.5px;height:1.3px;background:#222;"></div>
<div style="left:566px;top:209.4px;width:1.3px;height:6.5px;background:#222;"></div>
<span class="t" style="left:574.00px;top:207px;font-size:8.5px;line-height:12px;transform:scaleX(0.8659);color:#4a4a4a;">pixels at</span>
<div style="left:608px;top:202px;width:60px;height:21px;background:#fff;border:1px solid #d2ccc5;border-radius:3.5px;"></div>
<div style="left:645.4px;top:203px;width:1px;height:19px;background:#ece9e6;"></div>
<div style="left:656.6px;top:203px;width:1px;height:19px;background:#ece9e6;"></div>
<span class="t" style="left:610.50px;top:207px;font-size:8.5px;line-height:12px;transform:scaleX(0.9638);color:#1c1c1c;">96.00</span>
<div style="left:648px;top:212px;width:6px;height:1.3px;background:#222;"></div>
<div style="left:659.4px;top:212px;width:6.5px;height:1.3px;background:#222;"></div>
<div style="left:662px;top:209.4px;width:1.3px;height:6.5px;background:#222;"></div>
<span class="t" style="left:670.00px;top:207px;font-size:8.5px;line-height:12px;transform:scaleX(0.9257);color:#4a4a4a;">dpi</span>
<span class="t" style="left:485.50px;top:231px;font-size:8.5px;line-height:12px;transform:scaleX(0.9283);color:#4a4a4a;">Height:</span>
<div style="left:512px;top:226px;width:60px;height:21px;background:#fff;border:1px solid #d2ccc5;border-radius:3.5px;"></div>
<div style="left:549.6px;top:227px;width:1px;height:19px;background:#ece9e6;"></div>
<div style="left:560.6px;top:227px;width:1px;height:19px;background:#ece9e6;"></div>
<span class="t" style="left:514.50px;top:231px;font-size:8.5px;line-height:12px;transform:scaleX(0.9026);color:#1c1c1c;">512</span>
<div style="left:553px;top:236px;width:6px;height:1.3px;background:#222;"></div>
<div style="left:563.4px;top:236px;width:6.5px;height:1.3px;background:#222;"></div>
<div style="left:566px;top:233.4px;width:1.3px;height:6.5px;background:#222;"></div>
<span class="t" style="left:574.00px;top:231px;font-size:8.5px;line-height:12px;transform:scaleX(0.8659);color:#4a4a4a;">pixels at</span>
<div style="left:608px;top:226px;width:60px;height:21px;background:#f5f4f3;border:1px solid #d2ccc5;border-radius:3.5px;"></div>
<div style="left:645.4px;top:227px;width:1px;height:19px;background:#ece9e6;"></div>
<div style="left:656.6px;top:227px;width:1px;height:19px;background:#ece9e6;"></div>
<span class="t" style="left:610.50px;top:231px;font-size:8.5px;line-height:12px;transform:scaleX(0.9638);color:#b4b4b4;">96.00</span>
<div style="left:648px;top:236px;width:6px;height:1.3px;background:#c4c4c4;"></div>
<div style="left:659.4px;top:236px;width:6.5px;height:1.3px;background:#c4c4c4;"></div>
<div style="left:662px;top:233.4px;width:1.3px;height:6.5px;background:#c4c4c4;"></div>
<span class="t" style="left:670.00px;top:231px;font-size:8.5px;line-height:12px;transform:scaleX(0.9257);color:#9a9a9a;">dpi</span>
<span class="t" style="left:481.00px;top:249px;font-size:8.5px;line-height:12px;transform:scaleX(0.8142);color:#1e1e1e;font-weight:bold;">Filename</span>
<div style="left:480.5px;top:262.3px;width:139.8px;height:20.7px;background:#fff;border:1px solid #d2ccc5;border-radius:3.5px;"></div>
<div style="left:486.2px;top:267.6px;width:113.8px;height:9.4px;background:#2f62d0;"></div>
<span class="t" style="left:487.00px;top:266px;font-size:8.5px;line-height:12px;transform:scaleX(0.8505);color:#fff;-webkit-text-stroke:0.08px currentColor;">C:\Users\RK\Desktop\image20.png</span>
<div style="left:624.4px;top:262.3px;width:59.8px;height:20.3px;background:#d9d5d1;border:1px solid #c2bcb6;border-radius:3px;"></div>
<div style="left:626px;top:264px;width:56.6px;height:17px;background:transparent;border:1px dotted #a8a4a0;border-radius:2px;"></div>
<svg style="left:629.5px;top:266.5px" width="11" height="12" viewBox="0 0 11 12"><path d="M0.6 1.6H4.4L5.4 3H10.2V11H0.6Z" fill="#efe7d6" stroke="#b5a78c" stroke-width="0.8"/><path d="M0.6 4.4H10.2" stroke="#cfc3a8" stroke-width="0.6"/></svg>
<span class="t" style="left:642.00px;top:266px;font-size:8.5px;line-height:12px;transform:scaleX(0.8628);color:#2a2a2a;">Export As...</span>
<div style="left:692px;top:125px;width:6px;height:1px;background:#e2e0de;"></div>
<div style="left:692px;top:178px;width:6px;height:1px;background:#e2e0de;"></div>
<div style="left:0px;top:571px;width:7px;height:3px;background:#c6c6c6;"></div>
<div style="left:0px;top:574px;width:7px;height:3.5px;background:#8e8e8e;"></div>
<div style="left:0px;top:577.5px;width:7px;height:5px;background:#d8d8d8;"></div>
<div style="left:0px;top:582.5px;width:7px;height:12px;background:#474747;"></div>
<div style="left:0px;top:594.5px;width:7px;height:4px;background:#d4d4d4;"></div>
<div style="left:0px;top:598.5px;width:7px;height:2.5px;background:#9a9a9a;"></div>
<div style="left:0px;top:601px;width:7px;height:9px;background:#dedede;"></div>
<div style="left:7px;top:286px;width:691px;height:330px;background:#202020;box-shadow:0 0 8px 0 rgba(0,0,0,0.28);"></div>
<div style="left:7px;top:286px;width:691px;height:19px;background:#000;"></div>
<div style="left:7px;top:305px;width:691px;height:26px;background:#191919;"></div>
<div style="left:7px;top:331px;width:691px;height:19px;background:#202020;"></div>
<div style="left:7px;top:350px;width:111.5px;height:194px;background:#191919;"></div>
<div style="left:118.5px;top:350px;width:580px;height:194px;background:#202020;"></div>
<div style="left:7px;top:544px;width:691px;height:70px;background:#383838;"></div>
<svg style="left:12px;top:289.5px" width="10.4" height="10.6" viewBox="0 0 10.4 10.6"><path d="M5.1 0.3L10 5.2L5.1 10.2L0.3 5.2Z" fill="#4a4d55"/><path d="M5.1 0.3L10 5.2L8.4 6.2L6.6 4.6L5.2 5.6L3.6 4.4L1.6 6.4L0.3 5.2Z" fill="#f4f4f4"/><path d="M3 5.8L5.2 6.4L7.4 5.6L8.2 6.6L5.2 8.6L2.4 6.8Z" fill="#0c0c0c"/></svg>
<span class="t" style="left:25.20px;top:289px;font-size:8.5px;line-height:12px;transform:scaleX(0.8710);color:#f2f2f2;-webkit-text-stroke:0.08px currentColor;">Select a filename for exporting</span>
<svg style="left:14.3px;top:314.2px" width="9" height="7.2" viewBox="0 0 9 7.2"><path d="M3.7 0.6L0.8 3.6L3.7 6.6M0.8 3.6H8.6" fill="none" stroke="#f0f0f0" stroke-width="1.2"/></svg>
<svg style="left:32.5px;top:314.2px" width="9" height="7.2" viewBox="0 0 9 7.2"><path d="M5.3 0.6L8.2 3.6L5.3 6.6M8.2 3.6H0.4" fill="none" stroke="#8a8a8a" stroke-width="1.1"/></svg>
<svg style="left:49.3px;top:315.8px" width="5" height="3.4" viewBox="0 0 6 4"><path d="M0.6 0.6L3 3L5.4 0.6" fill="none" stroke="#f0f0f0" stroke-width="1.5"/></svg>
<svg style="left:60.6px;top:313.8px" width="8" height="8.4" viewBox="0 0 8 8.4"><path d="M0.8 3.8L4 0.8L7.2 3.8M4 1V8.2" fill="none" stroke="#f0f0f0" stroke-width="1.2"/></svg>
<div style="left:73px;top:307.7px;width:531px;height:19.3px;background:#191919;border:1px solid #4e4e4e;"></div>
<svg style="left:76px;top:311.5px" width="9" height="10" viewBox="0 0 9 10"><path d="M0.3 0.5H5.5V2H8.5V9.5H0.3Z" fill="#f6d569"/><path d="M5.5 2H8.5V9.5H5.5Z" fill="#e9c04f"/></svg>
<span class="t" style="left:98.10px;top:311px;font-size:8.5px;line-height:12px;transform:scaleX(0.7907);color:#f2f2f2;-webkit-text-stroke:0.08px currentColor;">This PC</span>
<span class="t" style="left:136.00px;top:311px;font-size:8.5px;line-height:12px;transform:scaleX(0.8556);color:#f2f2f2;-webkit-text-stroke:0.08px currentColor;">Data (D:)</span>
<span class="t" style="left:179.50px;top:311px;font-size:8.5px;line-height:12px;transform:scaleX(0.7937);color:#f2f2f2;-webkit-text-stroke:0.08px currentColor;">RAVI-2021</span>
<span class="t" style="left:226.50px;top:311px;font-size:8.5px;line-height:12px;transform:scaleX(0.8320);color:#f2f2f2;-webkit-text-stroke:0.08px currentColor;">WORK</span>
<span class="t" style="left:262.00px;top:311px;font-size:8.5px;line-height:12px;transform:scaleX(0.8672);color:#f2f2f2;-webkit-text-stroke:0.08px currentColor;">Educba</span>
<span class="t" style="left:300.50px;top:311px;font-size:8.5px;line-height:12px;transform:scaleX(0.8671);color:#f2f2f2;-webkit-text-stroke:0.08px currentColor;">Inkscape</span>
<span class="t" style="left:344.20px;top:311px;font-size:8.5px;line-height:12px;transform:scaleX(0.8624);color:#f2f2f2;-webkit-text-stroke:0.08px currentColor;">Transparent background</span>
<span class="t" style="left:437.80px;top:311px;font-size:8.5px;line-height:12px;transform:scaleX(0.8918);color:#f2f2f2;-webkit-text-stroke:0.08px currentColor;">exported</span>
<svg style="left:89px;top:315.6px" width="3.2" height="4.8" viewBox="0 0 4 6"><path d="M0.7 0.7L3 3L0.7 5.3" fill="none" stroke="#9c9c9c" stroke-width="0.9"/></svg>
<svg style="left:128px;top:315.6px" width="3.2" height="4.8" viewBox="0 0 4 6"><path d="M0.7 0.7L3 3L0.7 5.3" fill="none" stroke="#9c9c9c" stroke-width="0.9"/></svg>
<svg style="left:171px;top:315.6px" width="3.2" height="4.8" viewBox="0 0 4 6"><path d="M0.7 0.7L3 3L0.7 5.3" fill="none" stroke="#9c9c9c" stroke-width="0.9"/></svg>
<svg style="left:218.5px;top:315.6px" width="3.2" height="4.8" viewBox="0 0 4 6"><path d="M0.7 0.7L3 3L0.7 5.3" fill="none" stroke="#9c9c9c" stroke-width="0.9"/></svg>
<svg style="left:254.5px;top:315.6px" width="3.2" height="4.8" viewBox="0 0 4 6"><path d="M0.7 0.7L3 3L0.7 5.3" fill="none" stroke="#9c9c9c" stroke-width="0.9"/></svg>
<svg style="left:292.5px;top:315.6px" width="3.2" height="4.8" viewBox="0 0 4 6"><path d="M0.7 0.7L3 3L0.7 5.3" fill="none" stroke="#9c9c9c" stroke-width="0.9"/></svg>
<svg style="left:336px;top:315.6px" width="3.2" height="4.8" viewBox="0 0 4 6"><path d="M0.7 0.7L3 3L0.7 5.3" fill="none" stroke="#9c9c9c" stroke-width="0.9"/></svg>
<svg style="left:430px;top:315.6px" width="3.2" height="4.8" viewBox="0 0 4 6"><path d="M0.7 0.7L3 3L0.7 5.3" fill="none" stroke="#9c9c9c" stroke-width="0.9"/></svg>
<svg style="left:570px;top:316px" width="7" height="5" viewBox="0 0 7 5"><path d="M0.7 0.7L3.5 3.6L6.3 0.7" fill="none" stroke="#d8d8d8" stroke-width="1.1"/></svg>
<svg style="left:589.5px;top:313.5px" width="9" height="9" viewBox="0 0 9 9"><path d="M6.9 2.4A3.1 3.1 0 1 0 7.6 4.6" fill="none" stroke="#d8d8d8" stroke-width="1"/><path d="M4.9 0.4L7.6 0.6L7.3 3.2Z" fill="#d8d8d8"/></svg>
<div style="left:610.8px;top:307.7px;width:95px;height:19.3px;background:#191919;border:1px solid #4e4e4e;"></div>
<svg style="left:620px;top:312.5px" width="9" height="9" viewBox="0 0 9 9"><circle cx="5.4" cy="3.4" r="2.6" fill="none" stroke="#a8a8a8" stroke-width="0.9"/><path d="M3.5 5.3L0.6 8.3" stroke="#a8a8a8" stroke-width="1"/></svg>
<span class="t" style="left:637.00px;top:311px;font-size:8.5px;line-height:12px;transform:scaleX(0.8497);color:#8f8f8f;-webkit-text-stroke:0.08px currentColor;">Search exported</span>
<span class="t" style="left:17.90px;top:334px;font-size:8.5px;line-height:12px;transform:scaleX(0.8611);color:#f2f2f2;-webkit-text-stroke:0.08px currentColor;">Organize</span>
<svg style="left:50px;top:339px" width="6" height="4" viewBox="0 0 6 4"><path d="M0 0.3H6L3 3.6Z" fill="#dcdcdc"/></svg>
<span class="t" style="left:75.00px;top:334px;font-size:8.5px;line-height:12px;transform:scaleX(0.8984);color:#f2f2f2;-webkit-text-stroke:0.08px currentColor;">New folder</span>
<svg style="left:685px;top:335px" width="12" height="10" viewBox="0 0 12 10"><rect x="0.8" y="0.8" width="2.8" height="8.4" fill="#f0f0f0"/><path d="M5 2H7M8 2H10M5 5H7M8 5H10M5 8H7M8 8H10" stroke="#8c8c8c" stroke-width="0.9"/></svg>
<div style="left:118.5px;top:349.5px;width:580px;height:1px;background:transparent;border-top:1px dotted #2b2b2b;"></div>
<div style="left:108px;top:350px;width:9.5px;height:194px;background:#191919;"></div>
<div style="left:108px;top:394.7px;width:9.5px;height:102.3px;background:#4d4d4d;"></div>
<svg style="left:109.8px;top:354.2px" width="5.6" height="4" viewBox="0 0 5.6 4"><path d="M0.6 3.4L2.8 1L5 3.4" fill="none" stroke="#a4a4a4" stroke-width="1.1"/></svg>
<svg style="left:109.8px;top:537.2px" width="5.6" height="4" viewBox="0 0 5.6 4"><path d="M0.6 0.6L2.8 3L5 0.6" fill="none" stroke="#a4a4a4" stroke-width="1.1"/></svg>
<div style="left:7px;top:490.3px;width:101px;height:14px;background:#333333;"></div>
<span class="t" style="left:131.10px;top:352px;font-size:8.5px;line-height:12px;transform:scaleX(0.8865);color:#f2f2f2;-webkit-text-stroke:0.08px currentColor;">Name</span>
<span class="t" style="left:293.50px;top:352px;font-size:8.5px;line-height:12px;transform:scaleX(0.8867);color:#f2f2f2;-webkit-text-stroke:0.08px currentColor;">Date modified</span>
<span class="t" style="left:384.00px;top:352px;font-size:8.5px;line-height:12px;transform:scaleX(0.7869);color:#f2f2f2;-webkit-text-stroke:0.08px currentColor;">Type</span>
<span class="t" style="left:458.00px;top:352px;font-size:8.5px;line-height:12px;transform:scaleX(0.7983);color:#f2f2f2;-webkit-text-stroke:0.08px currentColor;">Size</span>
<div style="left:289px;top:350.5px;width:1px;height:15.5px;background:#4a4a4a;"></div>
<div style="left:379px;top:350.5px;width:1px;height:15.5px;background:#4a4a4a;"></div>
<div style="left:454px;top:350.5px;width:1px;height:15.5px;background:#4a4a4a;"></div>
<div style="left:503px;top:350.5px;width:1px;height:15.5px;background:#4a4a4a;"></div>
<svg style="left:205.6px;top:350.2px" width="5.6" height="3.6" viewBox="0 0 5.6 3.6"><path d="M0.6 3.2L2.8 0.9L5 3.2" fill="none" stroke="#a4a4a4" stroke-width="1"/></svg>
<span class="t" style="left:385.30px;top:374px;font-size:8.5px;line-height:12px;transform:scaleX(0.8754);color:#f2f2f2;-webkit-text-stroke:0.08px currentColor;">No items match your search.</span>
<svg style="left:21.5px;top:358.09999999999997px" width="11" height="10" viewBox="0 0 11 10"><rect x="0.6" y="0.5" width="9.8" height="6.4" fill="#4db3f2"/><path d="M0.6 6.9L10.4 0.5V6.9Z" fill="#3aa2e8"/><rect x="4.6" y="6.9" width="1.8" height="1.6" fill="#9aa0a6"/><rect x="1.6" y="8.4" width="7.8" height="1" fill="#c9cdd1"/></svg>
<svg style="left:26px;top:372.5px" width="11" height="11" viewBox="0 0 11 11"><path d="M5.6 0.4L10.4 2.2V8.2L5.6 10.4L0.7 8.2V2.2Z" fill="#29b6e8"/><path d="M0.7 2.2L5.6 4.2V10.4L0.7 8.2Z" fill="#e9f6fc"/><path d="M5.6 0.4L10.4 2.2L5.6 4.2L0.7 2.2Z" fill="#6fd3f3"/></svg>
<svg style="left:26px;top:387.9px" width="11" height="9" viewBox="0 0 11 9"><rect x="0.5" y="0.6" width="10.3" height="7.2" fill="#1f9bf1"/><rect x="0.5" y="6.8" width="10.3" height="1.2" fill="#0f6fc4"/></svg>
<svg style="left:27px;top:402.09999999999997px" width="9" height="11" viewBox="0 0 9 11"><path d="M0.7 0.4H6L8.3 2.7V10.6H0.7Z" fill="#f3f3f3"/><path d="M6 0.4V2.7H8.3Z" fill="#c8c8c8"/><path d="M2.2 4.2H6.8M2.2 6H6.8M2.2 7.8H6.8" stroke="#4a9be0" stroke-width="0.9"/><rect x="2.2" y="2" width="2.4" height="1.4" fill="#4a9be0"/></svg>
<svg style="left:26.5px;top:417.09999999999997px" width="11" height="11" viewBox="0 0 11 11"><path d="M3.8 0.4H7V5.2H10.2L5.4 10.4L0.6 5.2H3.8Z" fill="#2f93ea"/></svg>
<svg style="left:27.5px;top:432.09999999999997px" width="8" height="11" viewBox="0 0 8 11"><path d="M3.4 0.3C4.2 2.4 6.8 2.8 6.6 5.6C6.2 3.9 5 3.8 4.3 3.6V8.4A2 1.9 0 1 1 3.4 6.7Z" fill="#2aa3f2"/></svg>
<svg style="left:26.5px;top:448.7px" width="11" height="8" viewBox="0 0 11 8"><rect x="0.4" y="0.4" width="9.8" height="7" fill="#f2f2f2"/><rect x="1.3" y="1.3" width="8" height="5.2" fill="#69b7ea"/><path d="M1.3 6.5L4.2 3.6L6.2 5.4L7.4 4.4L9.3 6.5Z" fill="#2d6fa8"/></svg>
<svg style="left:28px;top:462.7px" width="8" height="10" viewBox="0 0 8 10"><rect x="0.4" y="0.3" width="6.8" height="9.4" fill="#3a3a3a"/><rect x="1.7" y="1" width="4.2" height="3.6" fill="#4b8fd8"/><rect x="1.7" y="5.4" width="4.2" height="3.6" fill="#d8963a"/><path d="M1.7 4.6L3.6 2.6L5.9 4.6Z" fill="#e8c24a"/></svg>
<svg style="left:26.5px;top:475.5px" width="11" height="12" viewBox="0 0 11 12"><path d="M2.2 5.4H8.6L10.2 8V10.6H0.6V8Z" fill="#e9e9e9"/><path d="M0.6 8H10.2V10.8H0.6Z" fill="#bdbdbd"/><rect x="1.2" y="8.5" width="8.4" height="1.7" fill="#7a7a7a"/><rect x="6.4" y="8.8" width="2.6" height="1.1" fill="#3fbf4f"/><path d="M0.8 1H2.3V2.5H0.8ZM2.8 1H4.3V2.5H2.8ZM0.8 3H2.3V4.5H0.8ZM2.8 3H4.3V4.5H2.8Z" fill="#2f9bf0"/></svg>
<svg style="left:26.5px;top:490.5px" width="11" height="12" viewBox="0 0 11 12"><path d="M2.2 5.4H8.6L10.2 8V10.6H0.6V8Z" fill="#e9e9e9"/><path d="M0.6 8H10.2V10.8H0.6Z" fill="#bdbdbd"/><rect x="1.2" y="8.5" width="8.4" height="1.7" fill="#7a7a7a"/><rect x="6.4" y="8.8" width="2.6" height="1.1" fill="#3fbf4f"/></svg>
<svg style="left:26.5px;top:505.5px" width="11" height="12" viewBox="0 0 11 12"><path d="M2.2 5.4H8.6L10.2 8V10.6H0.6V8Z" fill="#e9e9e9"/><path d="M0.6 8H10.2V10.8H0.6Z" fill="#bdbdbd"/><rect x="1.2" y="8.5" width="8.4" height="1.7" fill="#7a7a7a"/><rect x="6.4" y="8.8" width="2.6" height="1.1" fill="#3fbf4f"/></svg>
<svg style="left:26.5px;top:520.5px" width="11" height="12" viewBox="0 0 11 12"><path d="M2.2 5.4H8.6L10.2 8V10.6H0.6V8Z" fill="#e9e9e9"/><path d="M0.6 8H10.2V10.8H0.6Z" fill="#bdbdbd"/><rect x="1.2" y="8.5" width="8.4" height="1.7" fill="#7a7a7a"/><rect x="6.4" y="8.8" width="2.6" height="1.1" fill="#3fbf4f"/></svg>
<svg style="left:26.5px;top:535.5px" width="11" height="12" viewBox="0 0 11 12"><path d="M2.2 5.4H8.6L10.2 8V10.6H0.6V8Z" fill="#e9e9e9"/><path d="M0.6 8H10.2V10.8H0.6Z" fill="#bdbdbd"/><rect x="1.2" y="8.5" width="8.4" height="1.7" fill="#7a7a7a"/><rect x="6.4" y="8.8" width="2.6" height="1.1" fill="#3fbf4f"/></svg>
<span class="t" style="left:35.30px;top:356px;font-size:8.5px;line-height:12px;transform:scaleX(0.7841);color:#f2f2f2;-webkit-text-stroke:0.08px currentColor;">This PC</span>
<span class="t" style="left:39.90px;top:371px;font-size:8.5px;line-height:12px;transform:scaleX(0.8444);color:#f2f2f2;-webkit-text-stroke:0.08px currentColor;">3D Objects</span>
<span class="t" style="left:39.90px;top:386px;font-size:8.5px;line-height:12px;transform:scaleX(0.8531);color:#f2f2f2;-webkit-text-stroke:0.08px currentColor;">Desktop</span>
<span class="t" style="left:39.90px;top:401px;font-size:8.5px;line-height:12px;transform:scaleX(0.8793);color:#f2f2f2;-webkit-text-stroke:0.08px currentColor;">Documents</span>
<span class="t" style="left:39.90px;top:416px;font-size:8.5px;line-height:12px;transform:scaleX(0.8751);color:#f2f2f2;-webkit-text-stroke:0.08px currentColor;">Downloads</span>
<span class="t" style="left:39.90px;top:431px;font-size:8.5px;line-height:12px;transform:scaleX(0.9011);color:#f2f2f2;-webkit-text-stroke:0.08px currentColor;">Music</span>
<span class="t" style="left:39.90px;top:446px;font-size:8.5px;line-height:12px;transform:scaleX(0.8565);color:#f2f2f2;-webkit-text-stroke:0.08px currentColor;">Pictures</span>
<span class="t" style="left:39.90px;top:461px;font-size:8.5px;line-height:12px;transform:scaleX(0.8515);color:#f2f2f2;-webkit-text-stroke:0.08px currentColor;">Videos</span>
<span class="t" style="left:39.90px;top:476px;font-size:8.5px;line-height:12px;transform:scaleX(0.8564);color:#f2f2f2;-webkit-text-stroke:0.08px currentColor;">Windows 10 (C:)</span>
<span class="t" style="left:39.90px;top:491px;font-size:8.5px;line-height:12px;transform:scaleX(0.8295);color:#f2f2f2;-webkit-text-stroke:0.08px currentColor;">Data (D:)</span>
<span class="t" style="left:39.90px;top:506px;font-size:8.5px;line-height:12px;transform:scaleX(0.8598);color:#f2f2f2;-webkit-text-stroke:0.08px currentColor;">Entertainment (E:)</span>
<span class="t" style="left:39.90px;top:521px;font-size:8.5px;line-height:12px;transform:scaleX(0.8220);color:#f2f2f2;-webkit-text-stroke:0.08px currentColor;">System (F:)</span>
<span class="t" style="left:39.90px;top:536px;font-size:8.5px;line-height:12px;transform:scaleX(0.8822);color:#f2f2f2;-webkit-text-stroke:0.08px currentColor;">Manhar (H:)</span>
<div style="left:7px;top:543.8px;width:691px;height:70px;background:#383838;"></div>
<span class="t" style="left:48.00px;top:552px;font-size:8.5px;line-height:12px;transform:scaleX(0.8442);color:#f2f2f2;-webkit-text-stroke:0.08px currentColor;">File name:</span>
<div style="left:61.5px;top:562.3px;width:6px;height:0.8px;background:#f2f2f2;"></div>
<div style="left:84.5px;top:550.5px;width:620px;height:14.3px;background:#383838;border:1px solid #757575;"></div>
<span class="t" style="left:89.00px;top:552px;font-size:8.5px;line-height:12px;transform:scaleX(0.8749);color:#f2f2f2;-webkit-text-stroke:0.08px currentColor;">image20.png</span>
<span class="t" style="left:40.00px;top:568px;font-size:8.5px;line-height:12px;transform:scaleX(0.8058);color:#f2f2f2;-webkit-text-stroke:0.08px currentColor;">Save as type:</span>
<div style="left:65.8px;top:578.2px;width:3px;height:0.8px;background:#f2f2f2;"></div>
<div style="left:84.5px;top:566.2px;width:620px;height:14.7px;background:#383838;border:1px solid #757575;"></div>
<span class="t" style="left:88.00px;top:568px;font-size:8.5px;line-height:12px;transform:scaleX(0.7872);color:#f2f2f2;-webkit-text-stroke:0.08px currentColor;">PNG</span>
<svg style="left:14.6px;top:601px" width="6.6" height="4.2" viewBox="0 0 6.6 4.2"><path d="M0.7 3.7L3.3 1L5.9 3.7" fill="none" stroke="#ececec" stroke-width="1.4"/></svg>
<span class="t" style="left:26.00px;top:597px;font-size:8.5px;line-height:12px;transform:scaleX(0.8405);color:#f2f2f2;-webkit-text-stroke:0.08px currentColor;">Hide Folders</span>
<div style="left:617px;top:593.3px;width:55px;height:15.5px;background:#333;border:1.5px solid #f0f0f0;"></div>
<span class="t" style="left:636.50px;top:595px;font-size:8.5px;line-height:12px;transform:scaleX(0.8413);color:#f2f2f2;-webkit-text-stroke:0.08px currentColor;">Save</span>
<div style="left:636.8px;top:605.3px;width:3.6px;height:0.8px;background:#f2f2f2;"></div>
<div style="left:679px;top:593.3px;width:55px;height:15.5px;background:#333;border:1px solid #bdbdbd;"></div>
<span class="t" style="left:695.30px;top:595px;font-size:8.5px;line-height:12px;transform:scaleX(0.6690);color:#f2f2f2;-webkit-text-stroke:0.08px currentColor;">Cancel</span>
</div>
</body></html>
